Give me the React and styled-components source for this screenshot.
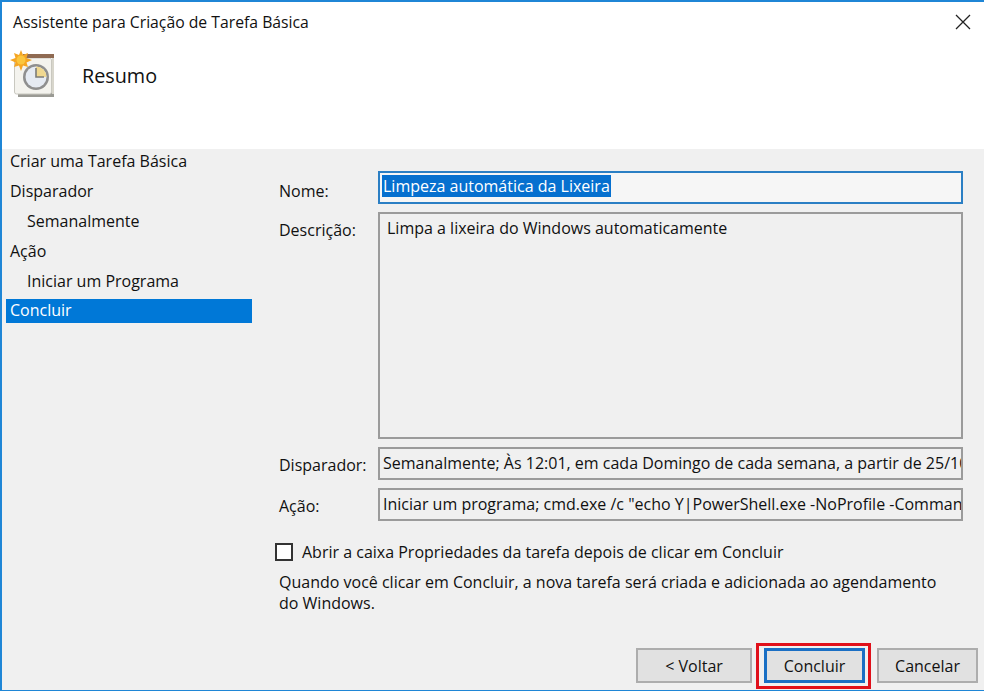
import React from "react";
import styled, { createGlobalStyle } from "styled-components";

const Global = createGlobalStyle`
  html, body { margin: 0; padding: 0; background: #fff; }
  * { box-sizing: border-box; }
`;

const Dialog = styled.div`
  width: 984px;
  height: 691px;
  display: flex;
  flex-direction: column;
  border: solid #1f86d6;
  border-width: 2px 0 1px 2px;
  background: #f0f0f0;
  color: #111;
  font-family: "Open Sans", "Noto Sans", sans-serif;
  font-size: 16px;
  overflow: hidden;
`;

const Header = styled.header`
  flex: 0 0 147px;
  background: #fff;
  display: flex;
  flex-direction: column;
`;

const TitleBar = styled.div`
  display: flex;
  justify-content: space-between;
  align-items: center;
  height: 40px;
  padding: 0 13px 0 11px;
  font-size: 15.75px;
`;

const Banner = styled.div`
  display: flex;
  align-items: center;
  gap: 27px;
  padding: 8px 0 0 7px;
`;

const Heading = styled.h1`
  margin: 0;
  font-size: 19.8px;
  font-weight: 400;
  position: relative;
  top: 1px;
`;

const Body = styled.div`
  flex: 1;
  display: flex;
  min-height: 0;
`;

const Steps = styled.nav`
  flex: 0 0 246px;
  margin-left: 4px;
  display: flex;
  flex-direction: column;
  gap: 6px;
`;

const Step = styled.div`
  height: 24px;
  line-height: ${(p) => (p.$active ? 22 : 24)}px;
  padding-left: ${(p) => (p.$indent ? 21 : 4)}px;
  background: ${(p) => (p.$active ? "#0078d7" : "transparent")};
  color: ${(p) => (p.$active ? "#fff" : "#111")};
`;

const Main = styled.main`
  flex: 1;
  display: flex;
  flex-direction: column;
  padding: 22px 20px 7px 27px;
  min-width: 0;
`;

const Form = styled.div`
  display: grid;
  grid-template-columns: 99px 585px;
  grid-template-rows: 33px 227px 33px 33px;
  row-gap: 8px;
`;

const Label = styled.label`
  padding-top: ${(p) => p.$top}px;
  line-height: 20px;
`;

const NameField = styled.div`
  border: 2px solid #2b7fc4;
  background: #f6f6f6;
  padding: 2px 0 0 2px;
  line-height: 21px;
  white-space: nowrap;
`;

const Selected = styled.span`
  display: block;
  width: fit-content;
  background: #0670cf;
  color: #fff;
  padding: 1px 1px 0;
`;

const Field = styled.div`
  border: 2px solid #9b9b9b;
  background: #f0f0f0;
  padding: ${(p) => (p.$area ? "4px 0 0 7px" : "4px 2px 0 3px")};
  line-height: 21px;
  white-space: nowrap;
  overflow: hidden;
`;

const CheckRow = styled.div`
  display: flex;
  align-items: center;
  gap: 9px;
  margin: 21px 0 0 -4px;
  line-height: 20px;
`;

const CheckBox = styled.span`
  flex: 0 0 18px;
  height: 18px;
  background: #fff;
  border: 2px solid #333;
`;

const Note = styled.p`
  margin: 10px 0 0;
  width: 676px;
  line-height: 21px;
`;

const Footer = styled.div`
  margin-top: auto;
  display: flex;
  justify-content: flex-end;
  align-items: flex-end;
  gap: 12px;
  margin-right: -14px;
`;

const Button = styled.button`
  width: ${(p) => p.$w}px;
  height: 35px;
  font: inherit;
  color: #111;
  background: #e1e1e1;
  border-style: solid;
  border-color: ${(p) => (p.$primary ? "#1a6fc4" : "#adadad")};
  border-width: ${(p) => (p.$primary ? 3 : 2)}px;
  padding: 0;
  position: relative;
`;

const Highlight = styled.span`
  position: absolute;
  inset: -8px -9px -9px -11px;
  border: 3px solid #e0101a;
  pointer-events: none;
`;

const CloseIcon = () => (
  <svg width="16" height="16" viewBox="0 0 16 16" fill="none" stroke="#222" strokeWidth="1.3">
    <path d="M1 1 15 15M15 1 1 15" />
  </svg>
);

const TaskIcon = () => (
  <svg width="46" height="48" viewBox="0 0 46 48">
    <rect x="9" y="11" width="36" height="36" fill="#9a9a94" />
    <rect x="5.5" y="8" width="37" height="36" rx="2" fill="#f4f3ee" stroke="#c9c8c0" />
    <rect x="14" y="4" width="31" height="4" fill="#8f6a52" />
    <rect x="43" y="8" width="2" height="36" fill="#d8d6cc" />
    <circle cx="27" cy="27" r="13" fill="#8f8f8f" />
    <circle cx="27" cy="27" r="10.5" fill="#e6ebf3" />
    <path d="M27 27V16.5A10.5 10.5 0 0 1 37.5 27Z" fill="#f0d890" />
    <path d="M27 18V27H35" fill="none" stroke="#7c7c78" strokeWidth="1.6" />
    <path
      d="M12 0 14 5 19 3 17.5 8 23 10 17.5 12.5 19 17 14 15.5 12 21 10 15.5 5 17 6.5 12.5 1 10 6.5 8 5 3 10 5Z"
      fill="#f5a623"
    />
    <circle cx="12" cy="10" r="4.5" fill="#fbc63d" />
  </svg>
);

export default function App() {
  return (
    <>
      <Global />
      <Dialog>
        <Header>
          <TitleBar>
            <span>Assistente para Criação de Tarefa Básica</span>
            <CloseIcon />
          </TitleBar>
          <Banner>
            <TaskIcon />
            <Heading>Resumo</Heading>
          </Banner>
        </Header>
        <Body>
          <Steps>
            <Step>Criar uma Tarefa Básica</Step>
            <Step>Disparador</Step>
            <Step $indent>Semanalmente</Step>
            <Step>Ação</Step>
            <Step $indent>Iniciar um Programa</Step>
            <Step $active>Concluir</Step>
          </Steps>
          <Main>
            <Form>
              <Label $top={10}>Nome:</Label>
              <NameField>
                <Selected>Limpeza automática da Lixeira</Selected>
              </NameField>
              <Label $top={8}>Descrição:</Label>
              <Field $area>Limpa a lixeira do Windows automaticamente</Field>
              <Label $top={8}>Disparador:</Label>
              <Field>Semanalmente; Às 12:01, em cada Domingo de cada semana, a partir de 25/10/2016</Field>
              <Label $top={8}>Ação:</Label>
              <Field>Iniciar um programa; cmd.exe /c "echo Y|PowerShell.exe -NoProfile -Command Clear-RecycleBin"</Field>
            </Form>
            <CheckRow>
              <CheckBox />
              <span>Abrir a caixa Propriedades da tarefa depois de clicar em Concluir</span>
            </CheckRow>
            <Note>
              Quando você clicar em Concluir, a nova tarefa será criada e adicionada ao agendamento do Windows.
            </Note>
            <Footer>
              <Button $w={116}>&lt; Voltar</Button>
              <Button $w={101} $primary>
                Concluir
                <Highlight />
              </Button>
              <Button $w={101}>Cancelar</Button>
            </Footer>
          </Main>
        </Body>
      </Dialog>
    </>
  );
}
